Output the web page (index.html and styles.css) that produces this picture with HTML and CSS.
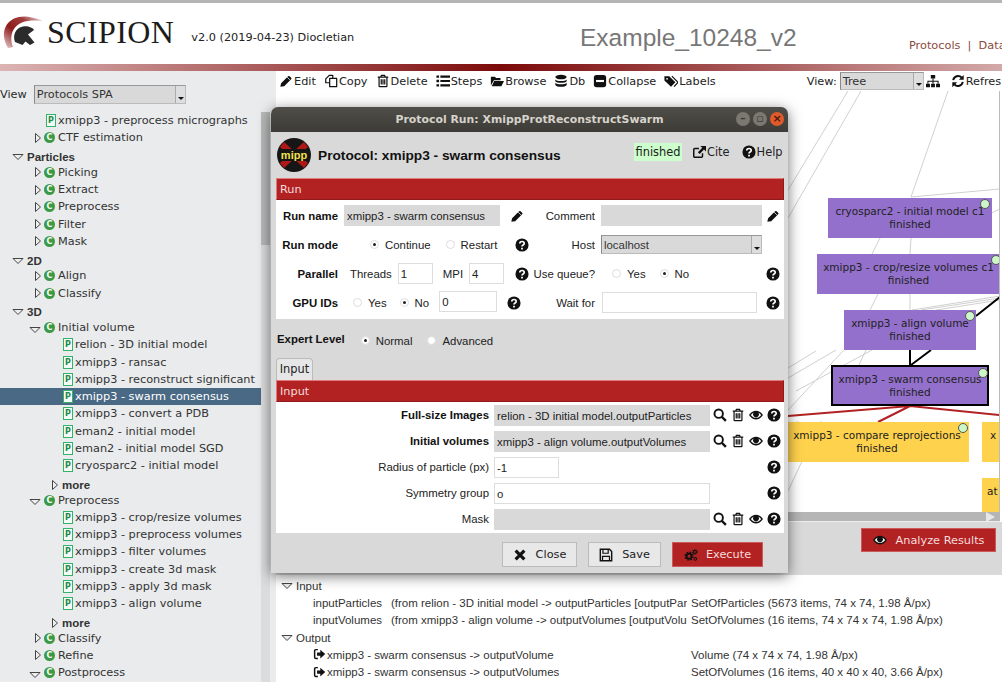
FILE: index.html
```html
<!DOCTYPE html>
<html lang="en">

<head>
    <meta charset="UTF-8">
    <title>Scipion - Example_10248_v2</title>
    <link rel="stylesheet" href="styles.css">
</head>

<body>
    <!-- icon set -->
    <svg class="sprite">
        <symbol id="tri-r" viewBox="0 0 8 12"><path d="M1.5 1.5L6.5 6L1.5 10.5Z" fill="#eee" stroke="#444" /></symbol>
        <symbol id="tri-d" viewBox="0 0 12 8"><path d="M1 1.5H11L6 6.5Z" fill="#eee" stroke="#444" /></symbol>
        <symbol id="pencil" viewBox="0 0 16 16"><path d="M1.5 14.5l.9-3.9 8-8a1.2 1.2 0 0 1 1.7 0l1.8 1.8a1.2 1.2 0 0 1 0 1.7l-8 8z" /><path d="M9.3 3.6l3.1 3.1" stroke="#fff" stroke-width=".9" /></symbol>
        <symbol id="copy" viewBox="0 0 16 16"><path d="M6 1.500h4v3.500H6.500v5H2V5.500zM6.500 5h8v9.500h-8z" fill="#fff" stroke="#111" stroke-width="1.400" stroke-linejoin="round" /></symbol>
        <symbol id="trash" viewBox="0 0 16 16"><path d="M2 3.500h12M5.500 3.500l.7-2h3.600l.7 2M3.500 3.500v10.200c0 .5.4.8.8.8h7.400c.4 0 .8-.3.8-.8V3.500M6 6v6M8 6v6M10 6v6" fill="none" stroke="#111" stroke-width="1.400" /></symbol>
        <symbol id="list" viewBox="0 0 16 16"><path d="M5 3h11M5 8h11M5 13h11" stroke="#111" stroke-width="2.400" /><path d="M.5 3h3M.5 8h3M.5 13h3" stroke="#111" stroke-width="2.600" /></symbol>
        <symbol id="folder" viewBox="0 0 16 16"><path d="M1 13V3h4.500l1.500 1.500h5V7H4.500zM2 14l2.800-6H16l-3 6z" /></symbol>
        <symbol id="db" viewBox="0 0 16 16"><ellipse cx="8" cy="3.500" rx="6.500" ry="2.600" /><path d="M1.500 6.300c1.500 2.400 11.500 2.400 13 0v2c-1.500 2.400-11.500 2.400-13 0zM1.500 10c1.500 2.400 11.500 2.400 13 0v2.500c-1.500 2.800-11.500 2.800-13 0z" /></symbol>
        <symbol id="minus-box" viewBox="0 0 16 16"><rect x="1" y="1" width="14" height="14" rx="3" /><path d="M3.500 8h9" stroke="#fff" stroke-width="2.400" /></symbol>
        <symbol id="tags" viewBox="0 0 16 16"><path d="M.5 2.500h5.500l7 7-5 5-7.500-7z" /><path d="M9 2.500l7 7-4.500 5" fill="none" stroke="#111" stroke-width="1.400" /><circle cx="3.500" cy="5.500" r="1" fill="#fff" /></symbol>
        <symbol id="sitemap" viewBox="0 0 16 16"><path d="M5.500 1h5v4h-5zM0 11h4.500v4H0zM5.800 11h4.400v4H5.800zM11.500 11H16v4h-4.500z" /><path d="M8 5v6M2.200 11V8.200h11.600V11" fill="none" stroke="#111" stroke-width="1.200" /></symbol>
        <symbol id="refresh" viewBox="0 0 16 16"><path d="M2.500 7a5.700 5.700 0 0 1 9.600-3M13.500 9a5.700 5.700 0 0 1-9.600 3" fill="none" stroke="#111" stroke-width="2.200" /><path d="M14.500 1v5.500H9zM1.500 15V9.500H7z" /></symbol>
        <symbol id="search" viewBox="0 0 16 16"><circle cx="6.500" cy="6.500" r="4.800" fill="none" stroke="#111" stroke-width="2.200" /><path d="M10 10l4.700 4.700" stroke="#111" stroke-width="2.800" /></symbol>
        <symbol id="eye" viewBox="0 0 16 16"><path d="M0 8c2.500-3.700 5.300-5 8-5s5.500 1.300 8 5c-2.500 3.700-5.300 5-8 5S2.500 11.700 0 8z" /><path d="M2 8c1.300-1.500 2.400-2.400 3.500-2.900a3.300 3.300 0 1 0 5 0c1.100.5 2.200 1.400 3.500 2.900-1.800 2.200-3.800 3.500-6 3.500S3.800 10.200 2 8z" fill="#fff" /></symbol>
        <symbol id="help" viewBox="0 0 16 16"><circle cx="8" cy="8" r="7.500" /><path d="M5.500 6.200c0-3 5-3 5 0 0 1.800-2.500 1.800-2.500 3.400" fill="none" stroke="#fff" stroke-width="1.900" /><path d="M7 11h2v2H7z" fill="#fff" /></symbol>
        <symbol id="cite" viewBox="0 0 16 16"><path d="M12 9.500v3.300c0 .7-.5 1.200-1.200 1.200H3.200c-.7 0-1.200-.5-1.200-1.200V5.200C2 4.500 2.500 4 3.200 4H8" fill="none" stroke="#111" stroke-width="1.700" /><path d="M9.500 1H16v6.500l-2.300-2.300-5 5-2-2 5-5z" /></symbol>
        <symbol id="times" viewBox="0 0 16 16"><path d="M3 3l10 10M13 3L3 13" stroke="#111" stroke-width="3.600" /></symbol>
        <symbol id="save" viewBox="0 0 16 16"><path d="M1.500 1.500h10.500l2.500 2.500v10.500h-13z" fill="none" stroke="#111" stroke-width="1.600" /><path d="M4.500 2v4h6V2M4 14V9.500h8V14" fill="none" stroke="#111" stroke-width="1.400" /></symbol>
        <symbol id="cogs" viewBox="0 0 18 16"><circle cx="6.500" cy="9.500" r="3.200" fill="none" stroke="#111" stroke-width="2.400" /><circle cx="6.500" cy="9.500" r="5" fill="none" stroke="#111" stroke-width="1.800" stroke-dasharray="2.200 1.730" /><circle cx="14" cy="4" r="1.900" fill="none" stroke="#111" stroke-width="1.400" /><circle cx="14" cy="4" r="3.100" fill="none" stroke="#111" stroke-width="1.100" stroke-dasharray="1.400 1.030" /><circle cx="14.500" cy="13" r="1.700" fill="none" stroke="#111" stroke-width="1.300" /></symbol>
        <symbol id="sign-in" viewBox="0 0 16 16"><path d="M6 2H3.500C2.500 2 2 2.500 2 3.500v8c0 1 .5 1.500 1.500 1.500H6" fill="none" stroke="#111" stroke-width="1.800" /><path d="M5 5.500h4V2l6 5.500-6 5.500V9.500H5z" /></symbol>
        <linearGradient id="swoosh" x1="0" y1="1" x2="1" y2="0"><stop offset="0" stop-color="#e8d0d0" /><stop offset=".4" stop-color="#8e1b1b" /><stop offset=".7" stop-color="#a03c3c" /><stop offset="1" stop-color="#eee" /></linearGradient>
        <symbol id="scipion" viewBox="0 0 42 36"><path d="M6 33C-1 22 1 9 12 3.500c8-3.500 17-2.500 29 2.500-8-1-16-.5-21 1.500C10 11.500 7 22 11 32z" fill="url(#swoosh)" /><path d="M13 27c-2.500-7 .5-14 8-15.500 5-.8 10 1.500 11 3.500l-6 4.500 6.500 8-4.500 2.500-4.500-3.500-3 3.500z" fill="#2b2b2b" /></symbol>
    </svg>

    <div class="app">
        <header class="top">
            <div class="brand">
                <svg class="brand-logo"><use href="#scipion" /></svg>
                <span class="brand-name">SCIPION</span>
                <span class="brand-version">v2.0 (2019-04-23) Diocletian</span>
            </div>
            <div class="project">Example_10248_v2</div>
            <nav class="top-nav">Protocols&nbsp; | &nbsp;Data</nav>
        </header>
        <div class="rule"></div>

        <div class="main">
            <aside class="side">
                <div class="side-view">
                    <span>View</span>
                    <div class="select side-select">Protocols SPA<span class="select-btn"></span></div>
                </div>
                <div class="side-body">
                    <div class="tree">
                        <div class="row leaf1"><span class="ico-p">P</span>xmipp3 - preprocess micrographs</div>
                        <div class="row grp"><svg class="tri-r"><use href="#tri-r" /></svg><span class="ico-c">C</span>CTF estimation</div>
                        <div class="row sec"><svg class="tri-d"><use href="#tri-d" /></svg>Particles</div>
                        <div class="row grp"><svg class="tri-r"><use href="#tri-r" /></svg><span class="ico-c">C</span>Picking</div>
                        <div class="row grp"><svg class="tri-r"><use href="#tri-r" /></svg><span class="ico-c">C</span>Extract</div>
                        <div class="row grp"><svg class="tri-r"><use href="#tri-r" /></svg><span class="ico-c">C</span>Preprocess</div>
                        <div class="row grp"><svg class="tri-r"><use href="#tri-r" /></svg><span class="ico-c">C</span>Filter</div>
                        <div class="row grp"><svg class="tri-r"><use href="#tri-r" /></svg><span class="ico-c">C</span>Mask</div>
                        <div class="row sec"><svg class="tri-d"><use href="#tri-d" /></svg>2D</div>
                        <div class="row grp"><svg class="tri-r"><use href="#tri-r" /></svg><span class="ico-c">C</span>Align</div>
                        <div class="row grp"><svg class="tri-r"><use href="#tri-r" /></svg><span class="ico-c">C</span>Classify</div>
                        <div class="row sec"><svg class="tri-d"><use href="#tri-d" /></svg>3D</div>
                        <div class="row grp open"><svg class="tri-d"><use href="#tri-d" /></svg><span class="ico-c">C</span>Initial volume</div>
                        <div class="row leaf2"><span class="ico-p">P</span>relion - 3D initial model</div>
                        <div class="row leaf2"><span class="ico-p">P</span>xmipp3 - ransac</div>
                        <div class="row leaf2"><span class="ico-p">P</span>xmipp3 - reconstruct significant</div>
                        <div class="row leaf2 selected"><span class="ico-p">P</span>xmipp3 - swarm consensus</div>
                        <div class="row leaf2"><span class="ico-p">P</span>xmipp3 - convert a PDB</div>
                        <div class="row leaf2"><span class="ico-p">P</span>eman2 - initial model</div>
                        <div class="row leaf2"><span class="ico-p">P</span>eman2 - initial model SGD</div>
                        <div class="row leaf2"><span class="ico-p">P</span>cryosparc2 - initial model</div>
                        <div class="row more"><svg class="tri-r"><use href="#tri-r" /></svg>more</div>
                        <div class="row grp open"><svg class="tri-d"><use href="#tri-d" /></svg><span class="ico-c">C</span>Preprocess</div>
                        <div class="row leaf2"><span class="ico-p">P</span>xmipp3 - crop/resize volumes</div>
                        <div class="row leaf2"><span class="ico-p">P</span>xmipp3 - preprocess volumes</div>
                        <div class="row leaf2"><span class="ico-p">P</span>xmipp3 - filter volumes</div>
                        <div class="row leaf2"><span class="ico-p">P</span>xmipp3 - create 3d mask</div>
                        <div class="row leaf2"><span class="ico-p">P</span>xmipp3 - apply 3d mask</div>
                        <div class="row leaf2"><span class="ico-p">P</span>xmipp3 - align volume</div>
                        <div class="row more"><svg class="tri-r"><use href="#tri-r" /></svg>more</div>
                        <div class="row grp"><svg class="tri-r"><use href="#tri-r" /></svg><span class="ico-c">C</span>Classify</div>
                        <div class="row grp"><svg class="tri-r"><use href="#tri-r" /></svg><span class="ico-c">C</span>Refine</div>
                        <div class="row grp open"><svg class="tri-d"><use href="#tri-d" /></svg><span class="ico-c">C</span>Postprocess</div>
                    </div>
                    <div class="vbar"><div class="vbar-thumb"></div></div>
                </div>
            </aside>

            <section class="content">
                <div class="toolbar">
                    <span class="tool"><svg class="ic"><use href="#pencil" /></svg>Edit</span>
                    <span class="tool"><svg class="ic"><use href="#copy" /></svg>Copy</span>
                    <span class="tool"><svg class="ic"><use href="#trash" /></svg>Delete</span>
                    <span class="tool"><svg class="ic"><use href="#list" /></svg>Steps</span>
                    <span class="tool"><svg class="ic"><use href="#folder" /></svg>Browse</span>
                    <span class="tool"><svg class="ic"><use href="#db" /></svg>Db</span>
                    <span class="tool"><svg class="ic"><use href="#minus-box" /></svg>Collapse</span>
                    <span class="tool"><svg class="ic"><use href="#tags" /></svg>Labels</span>
                    <span class="tool view-label">View:</span>
                    <div class="select view-select">Tree<span class="select-btn"></span></div>
                    <svg class="ic sitemap"><use href="#sitemap" /></svg>
                    <span class="tool refresh"><svg class="ic"><use href="#refresh" /></svg>Refres</span>
                </div>

                <div class="canvas">
                    <svg class="edges" width="724" height="421">
                        <g class="edge-gray">
                            <path d="M572 0L512 99M585 0L512 127M672 0L635 106M635 106L724 98" />
                            <path d="M635 147L634 163M604 147L596 163M724 118L662 147" />
                            <path d="M602 203L594 219M634 203L634 219M636 219L724 205M645 219L724 207M660 219L724 209" />
                            <path d="M560 259L512 287M568 259L512 319M596 259L520 300M540 260L512 277" />
                            <path d="M522 330L512 345M512 400L545 330M590 259L566 310" />
                        </g>
                        <g class="edge-black">
                            <path d="M634 259L634 274M655 259L635 274M700 225L724 206" />
                        </g>
                        <g class="edge-red">
                            <path d="M634 315L512 325M634 315L724 324M634 315L602 331" />
                        </g>
                    </svg>

                    <div class="node purple node-cryo">cryosparc2 - initial model c1<br>finished<i class="dot"></i></div>
                    <div class="node purple node-crop">xmipp3 - crop/resize volumes c1<br>finished<i class="dot"></i></div>
                    <div class="node purple node-align">xmipp3 - align volume<br>finished<i class="dot"></i></div>
                    <div class="node purple node-swarm">xmipp3 - swarm consensus<br>finished<i class="dot"></i></div>
                    <div class="node yellow node-compare">xmipp3 - compare reprojections<br>finished<i class="dot"></i></div>
                    <div class="node yellow node-xr">x</div>
                    <div class="node yellow node-at">at</div>
                </div>

                <div class="hbar"><span class="hbar-arrow"></span></div>

                <div class="action-band">
                    <button class="btn-red analyze"><svg class="ic"><use href="#eye" /></svg>Analyze Results</button>
                </div>

                <div class="summary">
                    <div class="sum-row head"><svg class="tri-d"><use href="#tri-d" /></svg>Input</div>
                    <div class="sum-row">
                        <span class="sum-name">inputParticles</span>
                        <span class="sum-from">(from relion - 3D initial model -&gt; outputParticles [outputPart</span>
                        <span class="sum-info">SetOfParticles (5673 items, 74 x 74, 1.98 Å/px)</span>
                    </div>
                    <div class="sum-row">
                        <span class="sum-name">inputVolumes</span>
                        <span class="sum-from">(from xmipp3 - align volume -&gt; outputVolumes [outputVolu</span>
                        <span class="sum-info">SetOfVolumes (16 items, 74 x 74 x 74, 1.98 Å/px)</span>
                    </div>
                    <div class="sum-row head"><svg class="tri-d"><use href="#tri-d" /></svg>Output</div>
                    <div class="sum-row">
                        <span class="sum-out"><svg class="ic-sm"><use href="#sign-in" /></svg>xmipp3 - swarm consensus -&gt; outputVolume</span>
                        <span class="sum-info">Volume (74 x 74 x 74, 1.98 Å/px)</span>
                    </div>
                    <div class="sum-row">
                        <span class="sum-out"><svg class="ic-sm"><use href="#sign-in" /></svg>xmipp3 - swarm consensus -&gt; outputVolumes</span>
                        <span class="sum-info">SetOfVolumes (16 items, 40 x 40 x 40, 3.66 Å/px)</span>
                    </div>
                </div>
            </section>
        </div>

        <!-- protocol form window -->
        <div class="dialog">
            <div class="titlebar">
                <span class="title-text">Protocol Run: XmippProtReconstructSwarm</span>
                <div class="win-btns">
                    <span class="win-btn">–</span>
                    <span class="win-btn">▫</span>
                    <span class="win-btn close">×</span>
                </div>
            </div>

            <div class="dlg-body">
                <div class="dlg-head">
                    <svg class="mipp" viewBox="0 0 34 34">
                        <circle cx="17" cy="17" r="17" fill="#161616" />
                        <path d="M7 4l10 9 10-9 4 5-9 8 9 8-4 5-10-9-10 9-4-5 9-8-9-8z" fill="#b01818" />
                        <rect x="2" y="11" width="30" height="12" rx="4" fill="#161616" />
                        <text x="17" y="21" class="mipp-text">mipp</text>
                    </svg>
                    <h1 class="dlg-title">Protocol: xmipp3 - swarm consensus</h1>
                    <span class="status">finished</span>
                    <span class="head-link"><svg class="ic"><use href="#cite" /></svg>Cite</span>
                    <span class="head-link"><svg class="ic"><use href="#help" /></svg>Help</span>
                </div>

                <div class="bar">Run</div>
                <div class="run-panel">
                    <label class="lbl strong">Run name</label>
                    <div class="cell">
                        <div class="field gray run-field">xmipp3 - swarm consensus</div>
                        <svg class="ic pencil-a"><use href="#pencil" /></svg>
                    </div>
                    <label class="lbl">Comment</label>
                    <div class="field gray"></div>
                    <div class="end"><svg class="ic"><use href="#pencil" /></svg></div>

                    <label class="lbl strong">Run mode</label>
                    <div class="cell mode">
                        <span class="opt"><i class="radio on"></i>Continue</span>
                        <span class="opt"><i class="radio"></i>Restart</span>
                        <svg class="ic push"><use href="#help" /></svg>
                    </div>
                    <label class="lbl">Host</label>
                    <div class="select host-select">localhost<span class="select-btn"></span></div>
                    <div class="end"></div>

                    <label class="lbl strong">Parallel</label>
                    <div class="cell parallel">
                        <span>Threads</span><span class="field num">1</span>
                        <span class="mpi">MPI</span><span class="field num">4</span>
                        <svg class="ic push"><use href="#help" /></svg>
                    </div>
                    <label class="lbl">Use queue?</label>
                    <div class="cell queue">
                        <span class="opt"><i class="radio"></i>Yes</span>
                        <span class="opt"><i class="radio on"></i>No</span>
                    </div>
                    <div class="end"><svg class="ic"><use href="#help" /></svg></div>

                    <label class="lbl strong">GPU IDs</label>
                    <div class="cell gpu">
                        <span class="opt"><i class="radio"></i>Yes</span>
                        <span class="opt"><i class="radio on"></i>No</span>
                        <span class="field gpu-field">0</span>
                        <svg class="ic"><use href="#help" /></svg>
                    </div>
                    <label class="lbl">Wait for</label>
                    <div class="field wait-field"></div>
                    <div class="end"><svg class="ic"><use href="#help" /></svg></div>
                </div>

                <div class="expert">
                    <b>Expert Level</b>
                    <span class="opt"><i class="radio on"></i>Normal</span>
                    <span class="opt"><i class="radio"></i>Advanced</span>
                </div>

                <div class="tab">Input</div>
                <div class="bar">Input</div>
                <div class="input-panel">
                    <label class="lbl strong">Full-size Images</label>
                    <div class="field gray">relion - 3D initial model.outputParticles</div>
                    <div class="acts"><svg class="ic"><use href="#search" /></svg><svg class="ic"><use href="#trash" /></svg><svg class="ic"><use href="#eye" /></svg><svg class="ic"><use href="#help" /></svg></div>

                    <label class="lbl strong">Initial volumes</label>
                    <div class="field gray">xmipp3 - align volume.outputVolumes</div>
                    <div class="acts"><svg class="ic"><use href="#search" /></svg><svg class="ic"><use href="#trash" /></svg><svg class="ic"><use href="#eye" /></svg><svg class="ic"><use href="#help" /></svg></div>

                    <label class="lbl">Radius of particle (px)</label>
                    <div class="field radius-field">-1</div>
                    <div class="acts"><svg class="ic"><use href="#help" /></svg></div>

                    <label class="lbl">Symmetry group</label>
                    <div class="field">o</div>
                    <div class="acts"><svg class="ic"><use href="#help" /></svg></div>

                    <label class="lbl">Mask</label>
                    <div class="field gray"></div>
                    <div class="acts"><svg class="ic"><use href="#search" /></svg><svg class="ic"><use href="#trash" /></svg><svg class="ic"><use href="#eye" /></svg><svg class="ic"><use href="#help" /></svg></div>
                </div>

                <div class="dlg-foot">
                    <button class="btn close-btn"><svg class="ic"><use href="#times" /></svg>Close</button>
                    <button class="btn save-btn"><svg class="ic"><use href="#save" /></svg>Save</button>
                    <button class="btn-red execute"><svg class="ic"><use href="#cogs" /></svg>Execute</button>
                </div>
            </div>
        </div>
    </div>
</body>

</html>
```

FILE: styles.css
```css
* {
    margin: 0;
    padding: 0;
    box-sizing: border-box;
}

body {
    width: 1002px;
    height: 682px;
    overflow: hidden;
    font-family: 'DejaVu Sans', sans-serif;
    font-size: 11.3px;
    color: #2b2b2b;
    background: #fff;
}

.sprite {
    position: absolute;
    width: 0;
    height: 0;
}

.app {
    position: relative;
    width: 1002px;
    height: 682px;
    display: flex;
    flex-direction: column;
    overflow: hidden;
}

.ic {
    width: 14px;
    height: 14px;
    fill: #111;
    flex: none;
}

/* header */
.top {
    height: 64px;
    display: flex;
    border-top: 3px solid #b5b5b5;
}

.brand {
    display: flex;
    align-items: center;
    flex: none;
    width: 580px;
    padding: 0 0 2px 2px;
}

.brand-logo {
    width: 42px;
    height: 36px;
    margin-right: 3px;
}

.brand-name {
    font-family: 'Liberation Serif', serif;
    font-size: 32px;
    color: #1c1c1c;
    letter-spacing: .4px;
}

.brand-version {
    margin: 10px 0 0 17px;
    color: #222;
}

.project {
    flex: none;
    width: 329px;
    padding-top: 21px;
    font-family: 'Liberation Sans', sans-serif;
    font-size: 24.5px;
    color: #777;
}

.top-nav {
    flex: none;
    padding-top: 36px;
    white-space: nowrap;
    color: #8c4a3c;
}

.rule {
    height: 7px;
    background: linear-gradient(90deg, #dcb4b4, #7c0a0a 50%, #d3a9a9);
}

.main {
    flex: 1;
    display: flex;
    min-height: 0;
}

/* left column */
.side {
    width: 276px;
    background: #e9ebed;
    padding-right: 6px;
    display: flex;
    flex-direction: column;
}

.side-view {
    height: 41px;
    flex: none;
    padding-top: 6px;
    display: flex;
    align-items: center;
    gap: 7px;
}

.select {
    position: relative;
    height: 19px;
    line-height: 18px;
    padding-left: 2px;
    background: #d9d9d9;
    border: 1px solid #bbb;
    border-left-color: #888;
    border-top-color: #999;
    color: #333;
    flex: none;
}

.select-btn {
    position: absolute;
    right: 0;
    top: 0;
    bottom: 0;
    width: 10px;
    background: #dedede;
    border-left: 1px solid #aaa;
}

.select-btn::after {
    content: "";
    position: absolute;
    left: 2px;
    bottom: 3px;
    border-top: 3px solid #111;
    border-left: 3px solid transparent;
    border-right: 3px solid transparent;
}

.side-select {
    width: 152px;
}

.side-body {
    flex: 1;
    display: flex;
    min-height: 0;
}

.tree {
    width: 261px;
    overflow: hidden;
}

.row {
    height: 17.25px;
    display: flex;
    align-items: center;
    white-space: nowrap;
    color: #333;
}

.row svg {
    flex: none;
}

.tri-r {
    width: 8px;
    height: 12px;
}

.tri-d {
    width: 12px;
    height: 8px;
}

.sec {
    padding-left: 12px;
    margin: 2px 0 -2px;
    font-family: 'Liberation Sans', sans-serif;
    font-weight: bold;
    font-size: 11.5px;
}

.sec .tri-d {
    margin-right: 3px;
}

.grp {
    padding-left: 34px;
}

.grp .tri-r {
    margin-right: 2px;
}

.grp.open {
    padding-left: 29px;
}

.grp.open .tri-d {
    margin: 4px 3px 0 0;
}

.leaf1 {
    padding-left: 46px;
}

.leaf2 {
    padding-left: 63px;
}

.more {
    padding-left: 51px;
    margin: 2px 0 -2px;
    font-family: 'Liberation Sans', sans-serif;
    font-weight: bold;
    font-size: 11.5px;
}

.more .tri-r {
    margin-right: 3px;
}

.selected {
    background: #4a6984;
    color: #fff;
}

.ico-p {
    width: 10px;
    height: 13px;
    margin-right: 2px;
    border: 1px solid #35b26a;
    background: #f4fbf6;
    color: #1f8a4c;
    font-size: 8px;
    font-weight: bold;
    line-height: 11px;
    text-align: center;
    flex: none;
}

.ico-c {
    width: 11px;
    height: 11px;
    margin-right: 3px;
    border-radius: 50%;
    background: #3c9a47;
    color: #fff;
    font-size: 8px;
    font-weight: bold;
    line-height: 11px;
    text-align: center;
    flex: none;
}

.vbar {
    width: 9px;
    background: #dcdcdc;
}

.vbar-thumb {
    height: 133px;
    background: #b9b9b9;
}

/* right column */
.content {
    width: 726px;
    display: flex;
    flex-direction: column;
}

.toolbar {
    height: 20px;
    display: flex;
    align-items: center;
    padding-left: 3px;
    gap: 8px;
    white-space: nowrap;
    overflow: hidden;
    color: #222;
}

.tool {
    display: flex;
    align-items: center;
    gap: 1px;
}

.view-label {
    margin-left: 83px;
    margin-right: -5px;
}

.view-select {
    width: 84px;
    height: 18px;
    line-height: 17px;
}

.sitemap {
    margin-left: -6px;
}

.refresh {
    margin-left: 3px;
}

.canvas {
    position: relative;
    width: 724px;
    height: 421px;
    overflow: hidden;
    background: #fff;
    border-right: 1px solid #bbb;
}

.edges {
    position: absolute;
    left: 0;
    top: 0;
    fill: none;
}

.edge-gray {
    stroke: #d0d0d0;
}

.edge-black {
    stroke: #000;
    stroke-width: 2;
}

.edge-red {
    stroke: #b22222;
    stroke-width: 2;
}

.node {
    position: absolute;
    height: 40px;
    padding-top: 7px;
    font-size: 10.5px;
    line-height: 13px;
    text-align: center;
    white-space: nowrap;
    color: #222;
}

.purple {
    background: #9370cc;
}

.yellow {
    background: #ffd24d;
}

.dot {
    position: absolute;
    width: 10px;
    height: 10px;
    border-radius: 50%;
    background: #ccf5c8;
    border: 1px solid #555;
}

.node-cryo {
    left: 552px;
    top: 107px;
    width: 164px;
}

.node-cryo .dot {
    left: 152px;
    top: 1px;
}

.node-crop {
    left: 541px;
    top: 163px;
    width: 183px;
}

.node-crop .dot {
    left: 174px;
    top: 1px;
}

.node-align {
    left: 568px;
    top: 219px;
    width: 132px;
}

.node-align .dot {
    left: 121px;
    top: 1px;
}

.node-swarm {
    left: 555px;
    top: 274px;
    width: 158px;
    height: 41px;
    padding-top: 6px;
    border: 2px solid #000;
}

.node-swarm .dot {
    left: 145px;
    top: 1px;
}

.node-compare {
    left: 509px;
    top: 331px;
    width: 184px;
}

.node-compare .dot {
    left: 173px;
    top: 1px;
}

.node-xr {
    left: 706px;
    top: 331px;
    width: 18px;
    text-align: left;
    padding-left: 8px;
}

.node-at {
    left: 706px;
    top: 387px;
    width: 18px;
    height: 34px;
    text-align: left;
    padding-left: 5px;
}

.hbar {
    position: relative;
    height: 10px;
    width: 724px;
    background: #b5b5b5;
    border-bottom: 1px solid #eee;
}

.hbar-arrow {
    position: absolute;
    right: 5px;
    top: 0;
    border-left: 9px solid #e8e8e8;
    border-top: 5px solid transparent;
    border-bottom: 5px solid transparent;
}

.action-band {
    height: 53px;
    background: #d9d9d9;
    padding: 6px 6px 0 0;
    display: flex;
    justify-content: flex-end;
}

.btn-red {
    display: flex;
    align-items: center;
    justify-content: center;
    border: 1px solid #c9595b;
    background: #b22222;
    color: #f3dcdc;
    font-family: 'DejaVu Sans', sans-serif;
    font-size: 11.3px;
}

.analyze {
    width: 135px;
    height: 24px;
    gap: 9px;
}

.summary {
    flex: 1;
    background: #fff;
    padding-top: 2px;
    font-family: 'Liberation Sans', sans-serif;
    font-size: 11.5px;
    color: #333;
}

.sum-row {
    height: 17.3px;
    display: flex;
    align-items: center;
    padding-left: 37px;
    white-space: nowrap;
}

.sum-row.head {
    padding-left: 5px;
}

.sum-row.head .tri-d {
    margin-right: 3px;
}

.sum-name {
    width: 78px;
    flex: none;
}

.sum-from {
    width: 296px;
    overflow: hidden;
    flex: none;
}

.sum-out {
    display: flex;
    align-items: center;
    width: 374px;
    flex: none;
}

.ic-sm {
    width: 13px;
    height: 13px;
    fill: #111;
    margin-right: 1px;
}

.sum-info {
    margin-left: 4px;
}

/* protocol window */
.dialog {
    position: absolute;
    left: 271px;
    top: 107px;
    width: 517px;
    height: 466px;
    display: flex;
    flex-direction: column;
    background: #d9d9d9;
    border-radius: 7px 7px 0 0;
    box-shadow: 0 3px 14px rgba(0, 0, 0, .55);
    font-family: 'Liberation Sans', sans-serif;
    font-size: 11.4px;
    color: #222;
}

.titlebar {
    height: 25px;
    flex: none;
    position: relative;
    background: linear-gradient(#504e48, #3c3b37);
    border-radius: 7px 7px 0 0;
    text-align: center;
    line-height: 25px;
    color: #d6d3cb;
    font-family: 'DejaVu Sans', sans-serif;
    font-size: 10.9px;
    font-weight: bold;
}

.win-btns {
    position: absolute;
    right: 4px;
    top: 5px;
    display: flex;
    gap: 3px;
}

.win-btn {
    width: 14px;
    height: 14px;
    border-radius: 50%;
    background: #7a7871;
    color: #3c3b37;
    line-height: 14px;
    font-size: 11px;
}

.win-btn.close {
    background: #e05a2b;
    color: #4a1c0c;
}

.dlg-body {
    flex: 1;
    padding: 0 4px 0 5px;
    display: flex;
    flex-direction: column;
}

.dlg-head {
    height: 46px;
    flex: none;
    display: flex;
    align-items: center;
    padding: 0 1px;
}

.mipp {
    width: 34px;
    height: 34px;
    flex: none;
    margin-right: 7px;
}

.mipp-text {
    fill: #f4e04d;
    font-family: 'Liberation Sans', sans-serif;
    font-size: 11px;
    font-weight: bold;
    text-anchor: middle;
}

.dlg-title {
    font-size: 13.7px;
    font-weight: bold;
    color: #111;
    width: 316px;
    white-space: nowrap;
}

.status {
    width: 48px;
    height: 18px;
    margin: -6px 10px 0 0;
    line-height: 18px;
    text-align: center;
    background: #ccffcc;
    font-family: 'DejaVu Sans', sans-serif;
    flex: none;
}

.head-link {
    display: flex;
    align-items: center;
    gap: 1px;
    margin: -6px 12px 0 0;
    font-family: 'DejaVu Sans', sans-serif;
}

.head-link:last-child {
    margin-right: 0;
}

.bar {
    height: 22px;
    flex: none;
    line-height: 21px;
    padding-left: 3px;
    background: #b22222;
    border: 1px solid #8e1a1a;
    border-top: 1px solid #e07a7a;
    border-left-color: #e07a7a;
    color: #f3dcdc;
    font-family: 'DejaVu Sans', sans-serif;
    font-size: 11.3px;
}

.lbl {
    text-align: right;
    white-space: nowrap;
}

.strong {
    font-weight: bold;
    color: #111;
}

.field {
    height: 21px;
    line-height: 21px;
    padding-left: 2px;
    background: #fff;
    border: 1px solid #ddd;
    white-space: nowrap;
    overflow: hidden;
    flex: none;
}

.field.gray {
    background: #d9d9d9;
    border-color: #d9d9d9;
}

.run-panel {
    height: 119px;
    flex: none;
    padding-top: 1px;
    background: #fff;
    display: grid;
    grid-template-columns: 68px 185px 72px 161px 22px;
    grid-auto-rows: 29px;
    align-items: center;
}

.run-panel .lbl {
    padding-right: 6px;
}

.cell {
    display: flex;
    align-items: center;
    white-space: nowrap;
}

.push {
    margin-left: auto;
}

.run-field {
    width: 156px;
}

.pencil-a {
    margin-left: 10px;
}

.end {
    display: flex;
    justify-content: center;
}

.opt {
    display: flex;
    align-items: center;
    gap: 6px;
    white-space: nowrap;
}

.radio {
    position: relative;
    width: 9px;
    height: 9px;
    border-radius: 50%;
    background: #fff;
    border: 1px solid #ddd;
    flex: none;
}

.radio.on::after {
    content: "";
    position: absolute;
    left: 2px;
    top: 2px;
    width: 3px;
    height: 3px;
    border-radius: 50%;
    background: #222;
}

.mode {
    padding-left: 26px;
}

.mode .opt + .opt {
    margin-left: 15px;
}

.parallel {
    padding-left: 6px;
}

.field.num {
    width: 35px;
    margin-left: 6px;
}

.mpi {
    margin-left: 10px;
}

.queue {
    padding-left: 11px;
}

.queue .opt + .opt {
    margin-left: 14px;
}

.gpu {
    padding-left: 9px;
}

.gpu .opt + .opt {
    margin-left: 13px;
}

.gpu-field {
    width: 58px;
    margin: -3px 10px 0 10px;
}

.wait-field {
    width: 155px;
    margin-left: 1px;
}

.host-select {
    width: 161px;
}

.expert {
    height: 39px;
    flex: none;
    display: flex;
    align-items: center;
    padding: 4px 0 0 1px;
    color: #222;
}

.expert b {
    margin: -4px 16px 0 0;
    color: #111;
}

.expert .opt + .opt {
    margin-left: 15px;
}

.tab {
    width: 37px;
    height: 22px;
    flex: none;
    line-height: 21px;
    text-align: center;
    background: #e6e6e6;
    border: 1px solid #bbb;
    border-bottom: 0;
    border-radius: 4px 4px 0 0;
    font-family: 'DejaVu Sans', sans-serif;
}

.input-panel {
    height: 131px;
    flex: none;
    background: #fff;
    display: grid;
    grid-template-columns: 218px 216px 74px;
    grid-auto-rows: 26px;
    align-items: center;
}

.input-panel .lbl {
    padding-right: 5px;
}

.radius-field {
    width: 65px;
}

.acts {
    display: flex;
    justify-content: flex-end;
    gap: 4px;
    padding-right: 3px;
}

.dlg-foot {
    flex: 1;
    display: flex;
    justify-content: flex-end;
    align-items: flex-start;
    gap: 11px;
    padding: 9px 21px 0 0;
}

.btn {
    height: 25px;
    display: flex;
    align-items: center;
    justify-content: center;
    background: #e8e8e8;
    border: 1px solid #bbb;
    color: #222;
    font-family: 'DejaVu Sans', sans-serif;
    font-size: 11.3px;
}

.close-btn {
    width: 75px;
    gap: 9px;
}

.save-btn {
    width: 73px;
    gap: 9px;
}

.execute {
    width: 91px;
    height: 25px;
    gap: 8px;
}
```
